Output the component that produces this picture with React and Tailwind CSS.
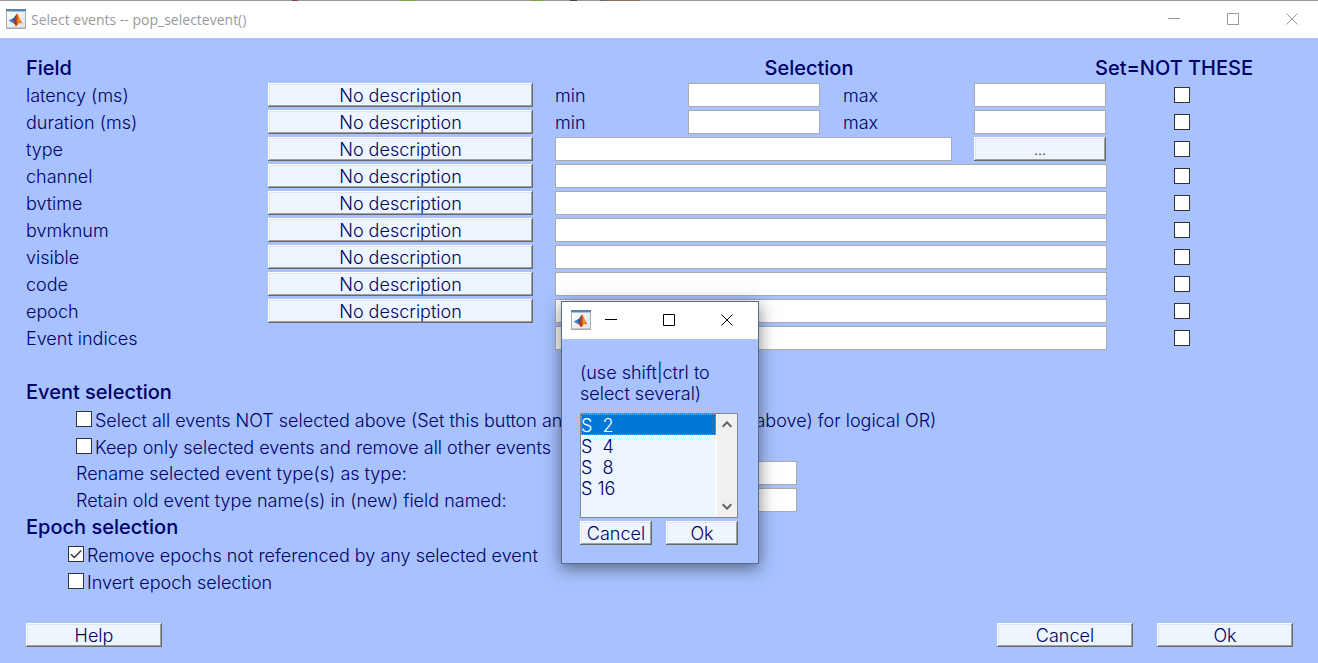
import React from "react";

const BEVEL =
  "flex h-6 items-center justify-center bg-[#edf5ff] pt-0.5 font-light leading-6 shadow-[inset_-1px_-1px_0_#696969,inset_1px_1px_0_#ffffff,inset_-2px_-2px_0_#a0a0a0,inset_2px_2px_0_#e3e3e3]";

function PushButton({ className = "", children, ...props }) {
  return (
    <button type="button" className={`${BEVEL} ${className}`} {...props}>
      {children}
    </button>
  );
}

function TextBox({ className = "", ...props }) {
  return (
    <input
      type="text"
      className={`h-6 min-w-0 border border-[#ababab] bg-white px-1 outline-none ${className}`}
      {...props}
    />
  );
}

function CheckBox(props) {
  return (
    <span className="relative flex size-4 shrink-0">
      <input
        type="checkbox"
        className="peer size-4 appearance-none border border-[#333333] bg-white"
        {...props}
      />
      <svg
        viewBox="0 0 16 16"
        className="pointer-events-none absolute inset-0 hidden size-4 peer-checked:block"
        fill="none"
        stroke="#333333"
        strokeWidth="1.4"
      >
        <path d="M3 8.2 L6.3 11.5 L13.2 4.6" />
      </svg>
    </span>
  );
}

function MatlabIcon({ id }) {
  return (
    <svg viewBox="0 0 20 20" className="size-5 shrink-0" aria-hidden="true">
      <defs>
        <linearGradient id={`${id}-frame`} x1="0" y1="0" x2="1" y2="1">
          <stop offset="0" stopColor="#ffffff" />
          <stop offset="1" stopColor="#dde1e6" />
        </linearGradient>
        <linearGradient id={`${id}-peak`} x1="0" y1="0" x2="1" y2="0">
          <stop offset="0" stopColor="#7a1d12" />
          <stop offset="0.4" stopColor="#c9441a" />
          <stop offset="0.6" stopColor="#f6a11c" />
          <stop offset="1" stopColor="#b7301a" />
        </linearGradient>
      </defs>
      <rect x="0.5" y="0.5" width="19" height="19" fill={`url(#${id}-frame)`} stroke="#a9adb3" />
      <rect x="1" y="18" width="18" height="1" fill="#c4c8ce" />
      <rect x="0" y="0" width="20" height="2" fill="#5b82ad" />
      <rect x="0" y="2" width="20" height="1" fill="#a9c0d8" />
      <path d="M2.6 11.6 L6.6 9.6 L9 11.8 L6.8 14 Z" fill="#3f7fc0" />
      <path d="M6.6 9.6 C8.4 9.4 9.4 6.4 10.9 4.6 L9.2 11.6 L8 12.8 Z" fill="#27508a" />
      <path
        d="M6.8 14 C8 13.4 9 11.4 9.6 9 C10.1 7 10.5 5 11.2 4.6 C12.6 5 14 11.6 16.8 15 C15.4 13.8 13.8 13.6 12.6 15 C11.6 16.2 10.6 17 9.6 17.2 C9.2 15.4 8.2 14 6.8 14 Z"
        fill={`url(#${id}-peak)`}
      />
    </svg>
  );
}

function WindowControls({ className }) {
  const shapes = [
    ["Minimize", "M0 5.5 H12"],
    ["Maximize", "M0.5 0.5 H11.5 V11.5 H0.5 Z"],
    ["Close", "M0.5 0.5 L11.5 11.5 M11.5 0.5 L0.5 11.5"],
  ];
  return (
    <div className={`flex ${className}`}>
      {shapes.map(([name, d]) => (
        <button key={name} type="button" aria-label={name} className="flex h-8 w-[52px] items-center justify-center">
          <svg viewBox="0 0 12 12" className="size-3" fill="none" stroke="currentColor">
            <path d={d} />
          </svg>
        </button>
      ))}
    </div>
  );
}

const ROW = "grid h-6 grid-cols-[242fr_265fr_22fr_552fr_186fr] items-center leading-[22px]";

function RangeFields({ name }) {
  return (
    <div className="grid grid-cols-[133fr_132fr_23fr_131fr_132fr_1fr] items-center">
      <label htmlFor={`${name}-min`} className="pt-0.5">
        min
      </label>
      <TextBox id={`${name}-min`} />
      <label htmlFor={`${name}-max`} className="col-start-4 pt-0.5">
        max
      </label>
      <TextBox id={`${name}-max`} />
    </div>
  );
}

function TypeFields() {
  return (
    <div className="grid grid-cols-[397fr_22fr_132fr_1fr] items-center">
      <TextBox id="type" />
      <PushButton className="col-start-3 text-sm">...</PushButton>
    </div>
  );
}

const FIELDS = [
  { name: "latency", label: "latency (ms)", kind: "range" },
  { name: "duration", label: "duration (ms)", kind: "range" },
  { name: "type", label: "type", kind: "type" },
  { name: "channel", label: "channel" },
  { name: "bvtime", label: "bvtime" },
  { name: "bvmknum", label: "bvmknum" },
  { name: "visible", label: "visible" },
  { name: "code", label: "code" },
  { name: "epoch", label: "epoch" },
  { name: "indices", label: "Event indices", plain: true },
];

function FieldRow({ name, label, kind, plain }) {
  return (
    <div className={ROW}>
      {kind === "range" ? (
        <span className="pt-0.5">{label}</span>
      ) : (
        <label htmlFor={name} className="pt-0.5">
          {label}
        </label>
      )}
      {plain ? <span /> : <PushButton>No description</PushButton>}
      <div className="col-start-4">
        {kind === "range" && <RangeFields name={name} />}
        {kind === "type" && <TypeFields />}
        {!kind && <TextBox id={name} className="block w-full" />}
      </div>
      <div className="pl-[67px]">
        <CheckBox aria-label={`Not these: ${label}`} />
      </div>
    </div>
  );
}

function CheckRow({ label, className, ...props }) {
  return (
    <label className={`flex h-6 items-center gap-[3px] ${className}`}>
      <CheckBox {...props} />
      <span className="pt-1 whitespace-nowrap">{label}</span>
    </label>
  );
}

function NamedRow({ id, label }) {
  return (
    <div className="grid h-6 grid-cols-[524fr_197fr_496fr] items-center pl-[50px] leading-[22px]">
      <label htmlFor={id} className="pt-0.5">
        {label}
      </label>
      <TextBox id={id} />
    </div>
  );
}

function TypeDialog() {
  const nb = "\u00a0";
  return (
    <section
      role="dialog"
      aria-label="Select event types"
      className="absolute top-[301px] left-[561px] w-[198px] border border-[#5b6b8c] bg-[#a8c2ff] shadow-[0_4px_16px_rgba(0,0,0,0.5)]"
    >
      <header className="flex h-[37px] items-center bg-white pb-0.5 pl-[9px] text-black">
        <MatlabIcon id="dialog" />
        <WindowControls className="-ml-1.5 gap-1.5" />
      </header>
      <div className="pt-[23px] pr-5 pb-[18px] pl-[18px]">
        <label htmlFor="event-types" className="block leading-[21px]">
          (use shift|ctrl to
          <br />
          select several)
        </label>
        <div className="mt-[9px] flex h-[105px] border border-[#828790] bg-[#edf5ff]">
          <select
            id="event-types"
            multiple
            size={4}
            defaultValue={["2"]}
            className="h-full min-w-0 flex-1 overflow-hidden bg-transparent p-0 font-light outline-none"
          >
            {[
              ["2", `S${nb}${nb}2`],
              ["4", `S${nb}${nb}4`],
              ["8", `S${nb}${nb}8`],
              ["16", `S${nb}16`],
            ].map(([value, text]) => (
              <option
                key={value}
                value={value}
                className="h-[21px] min-h-0 px-0 pt-px pb-0 font-light text-[#000066] checked:bg-[#0078d7] checked:bg-[linear-gradient(#0078d7,#0078d7)] checked:text-white checked:outline-1 checked:-outline-offset-1 checked:outline-dotted checked:outline-[#ff8728]"
              >
                {text}
              </option>
            ))}
          </select>
          <div className="flex w-[21px] flex-col items-center justify-between border-l border-white bg-[#f0f0f0] py-[7px] text-[#606060]">
            <svg viewBox="0 0 10 7" className="h-[7px] w-2.5" fill="none" stroke="currentColor" strokeWidth="2">
              <path d="M0.7 5.7 L5 1.4 L9.3 5.7" />
            </svg>
            <svg viewBox="0 0 10 7" className="h-[7px] w-2.5" fill="none" stroke="currentColor" strokeWidth="2">
              <path d="M0.7 1.3 L5 5.6 L9.3 1.3" />
            </svg>
          </div>
        </div>
        <div className="mt-[3px] flex justify-between">
          <PushButton className="w-[72px]">Cancel</PushButton>
          <PushButton className="w-[72px]">Ok</PushButton>
        </div>
      </div>
    </section>
  );
}

export default function App() {
  return (
    <div className="relative flex min-h-screen flex-col bg-[#a8c2ff] font-['Inter',sans-serif] text-[18px] leading-6 font-light text-[#000066]">
      <div className="h-px bg-[#999999] bg-[linear-gradient(90deg,transparent_292px,#8a4046_292px_298px,transparent_298px_399px,#7f9f4c_399px_417px,transparent_417px_531px,#7f9f4c_531px_545px,transparent_545px_570px,#4a4348_570px_577px,transparent_577px_600px,#5f6a80_600px_606px,#8a7460_606px_640px,transparent_640px)]" />
      <header className="flex h-[37px] items-center bg-white pb-0.5 pl-1.5 text-[#999999]">
        <MatlabIcon id="main" />
        <h1 className="ml-[5px] flex-1 pt-0.5 font-['Open_Sans',sans-serif] text-[14px] font-normal">
          Select events -- pop_selectevent()
        </h1>
        <WindowControls className="gap-[7px]" />
      </header>

      <main className="flex flex-col gap-[3px] pt-[18px] pr-[25px] pb-4 pl-[26px]">
        <div className={`${ROW} text-[20px] font-medium`}>
          <span>Field</span>
          <span className="col-start-4 text-center">
            <span className="pr-11">Selection</span>
          </span>
          <span className="-ml-3 whitespace-nowrap">Set=NOT THESE</span>
        </div>
        {FIELDS.map((f) => (
          <FieldRow key={f.name} {...f} />
        ))}

        <h2 className="mt-[27px] h-6 text-[20px] font-medium">Event selection</h2>
        <CheckRow
          className="pl-[50px]"
          label="Select all events NOT selected above (Set this button and all other not buttons (above) for logical OR)"
        />
        <CheckRow className="pl-[50px]" label="Keep only selected events and remove all other events" />
        <NamedRow id="rename" label="Rename selected event type(s) as type:" />
        <NamedRow id="retain" label="Retain old event type name(s) in (new) field named:" />

        <h2 className="h-6 text-[20px] font-medium">Epoch selection</h2>
        <CheckRow className="pl-[42px]" label="Remove epochs not referenced by any selected event" defaultChecked />
        <CheckRow className="pl-[42px]" label="Invert epoch selection" />

        <footer className="mt-[27px] flex gap-6">
          <PushButton className="w-[136px]">Help</PushButton>
          <PushButton className="ml-auto w-[136px]">Cancel</PushButton>
          <PushButton className="w-[136px]">Ok</PushButton>
        </footer>
      </main>

      <TypeDialog />
    </div>
  );
}
